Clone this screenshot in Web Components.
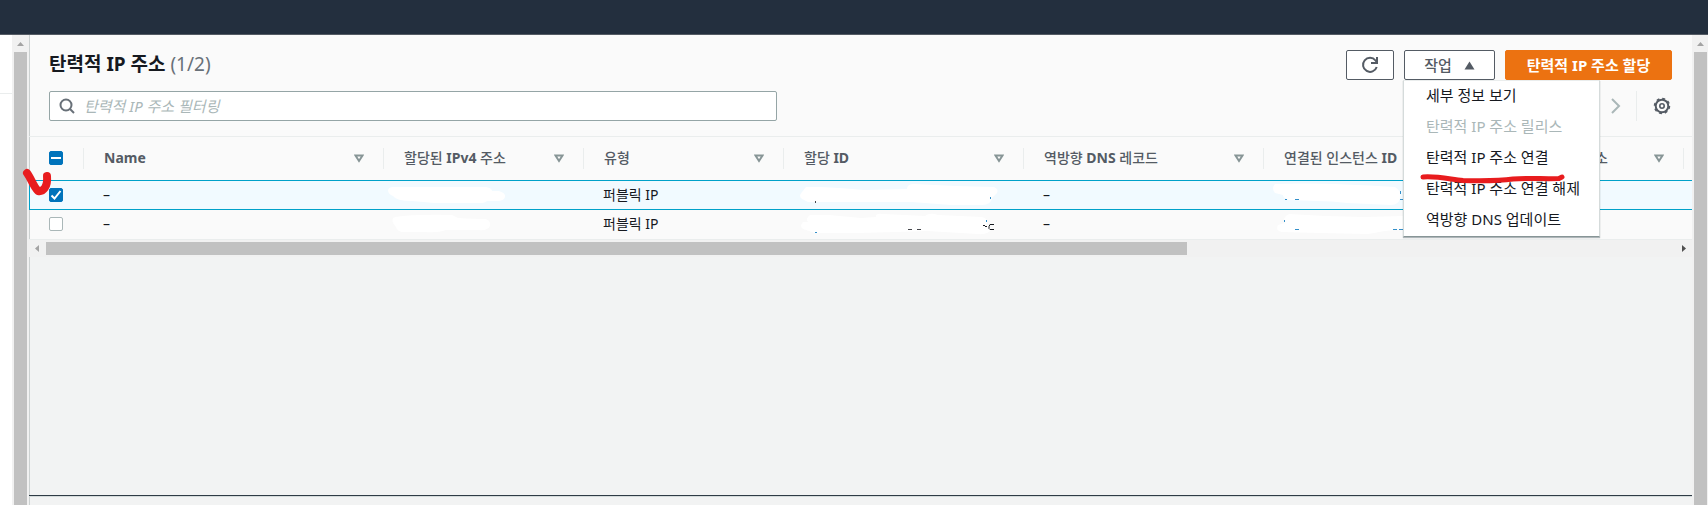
<!DOCTYPE html>
<html lang="ko">
<head>
<meta charset="utf-8">
<title>탄력적 IP 주소</title>
<style>
  body {
    margin: 0;
    background: #f2f3f3;
    color: #16191f;
    font: 14px/20px "Noto Sans", "Noto Sans CJK KR", sans-serif;
    overflow: hidden;
  }
</style>
</head>
<body>
<eip-page></eip-page>

<script>
class ScrollTrack extends HTMLElement {
  constructor() {
    super();
    this.attachShadow({ mode: "open" });
  }

  connectedCallback() {
    this.shadowRoot.innerHTML = `
      <style>
        :host {
          display: flex;
          flex-direction: column;
          box-sizing: border-box;
          width: 17px;
          flex: none;
          padding: 0 2px;
          background: #f1f1f1;
        }
        :host([edge]) { width: 16px; padding-right: 1px; }
        svg { display: block; flex: none; width: 13px; height: 17px; }
        .thumb { flex: 1; background: #c1c1c1; }
        :host([horizontal]) {
          flex-direction: row;
          width: auto;
          height: 17px;
          padding: 2px 0;
        }
        :host([horizontal]) svg { width: 17px; height: 13px; }
        :host([horizontal]) .thumb { flex: 0 0 1141px; }
        .rest { flex: 1; }
      </style>
      ${this.hasAttribute("horizontal") ? `
        <svg viewBox="0 0 17 13"><path d="M10 3v7L6 6.500z" fill="#a3a3a3"/></svg>
        <div class="thumb"></div>
        <div class="rest"></div>
        <svg viewBox="0 0 17 13"><path d="M7 3v7l4-3.500z" fill="#505050"/></svg>
      ` : `
        <svg viewBox="0 0 13 17"><path d="M3 11h7L6.500 7z" fill="#a3a3a3"/></svg>
        <div class="thumb"></div>
      `}
    `;
  }
}

class AppButton extends HTMLElement {
  constructor() {
    super();
    this.attachShadow({ mode: "open" });
  }

  connectedCallback() {
    this.shadowRoot.innerHTML = `
      <style>
        :host { display: block; }
        ::slotted(svg) { flex: none; }
        button {
          display: flex;
          align-items: center;
          justify-content: center;
          gap: 12px;
          box-sizing: border-box;
          height: 30px;
          width: 100%;
          padding: 0;
          border: 1px solid #545b64;
          border-radius: 2px;
          background: #fff;
          color: #545b64;
          font: 500 15px/20px "Noto Sans", "Noto Sans CJK KR", sans-serif;
          white-space: nowrap;
          cursor: pointer;
        }
        :host([primary]) button {
          background: #ec7211;
          border-color: #ec7211;
          color: #fff;
          font-weight: 700;
        }
      </style>
      <button type="button" aria-label="${this.getAttribute("label") || ""}"><slot></slot></button>
    `;
    if (!this.hasAttribute("label")) {
      this.shadowRoot.querySelector("button").removeAttribute("aria-label");
    }
  }
}

class ActionMenu extends HTMLElement {
  constructor() {
    super();
    this.attachShadow({ mode: "open" });
  }

  connectedCallback() {
    this.shadowRoot.innerHTML = `
      <style>
        :host { display: block; position: relative; width: 91px; }
        .menu {
          position: absolute;
          z-index: 3;
          top: 30px;
          left: -1px;
          box-sizing: border-box;
          width: 197px;
          border: 1px solid #d5dbdb;
          border-top-color: #eaeded;
          border-bottom-color: #879596;
          background: #fff;
          box-shadow: 0 1px 1px rgba(0, 28, 36, 0.3);
        }
        .menu button {
          display: block;
          width: 100%;
          height: 31px;
          padding: 0 0 4px 22px;
          border: 0;
          background: none;
          color: #16191f;
          font: 15px/20px "Noto Sans", "Noto Sans CJK KR", sans-serif;
          text-align: left;
          white-space: nowrap;
        }
        .menu button:disabled { color: #aab7b8; }
        .mark { position: absolute; left: 16px; top: 92px; }
      </style>
      <app-button>작업
        <svg width="11" height="9" viewBox="0 0 11 9"><path d="M5.500 0.500 10.500 8.500H0.500z" fill="#545b64"/></svg>
      </app-button>
      <div class="menu" role="menu">
        <button role="menuitem">세부 정보 보기</button>
        <button role="menuitem" disabled>탄력적 IP 주소 릴리스</button>
        <button role="menuitem">탄력적 IP 주소 연결</button>
        <button role="menuitem">탄력적 IP 주소 연결 해제</button>
        <button role="menuitem">역방향 DNS 업데이트</button>
        <svg class="mark" width="146" height="12" viewBox="0 0 146 12" fill="none" stroke="#e81c1e" stroke-width="5" stroke-linecap="round" stroke-linejoin="round">
          <path d="M3 4C17 3 29 6 43 7.500 61 8 79 8 93 6 109 5 125 6 139 5.500L142 4"/>
        </svg>
      </div>
    `;
  }
}

class SearchField extends HTMLElement {
  constructor() {
    super();
    this.attachShadow({ mode: "open" });
  }

  connectedCallback() {
    this.shadowRoot.innerHTML = `
      <style>
        :host { display: block; width: 728px; }
        label {
          display: flex;
          align-items: center;
          gap: 9px;
          box-sizing: border-box;
          height: 30px;
          padding: 0 9px;
          border: 1px solid #95a5a6;
          border-radius: 2px;
          background: #fff;
        }
        svg { flex: none; }
        input {
          flex: 1;
          padding: 0;
          border: 0;
          outline: 0;
          background: none;
          font: 15px/20px "Noto Sans", "Noto Sans CJK KR", sans-serif;
        }
        input::placeholder { color: #aab7b8; font-style: italic; opacity: 1; }
      </style>
      <label>
        <svg width="16" height="16" viewBox="0 0 16 16" fill="none" stroke="#687078" stroke-width="2">
          <circle cx="7" cy="7" r="5.500"/><path d="M11 11l4 4"/>
        </svg>
        <input type="text" placeholder="탄력적 IP 주소 필터링" aria-label="탄력적 IP 주소 필터링">
      </label>
    `;
  }
}

class EipTable extends HTMLElement {
  constructor() {
    super();
    this.attachShadow({ mode: "open" });
  }

  connectedCallback() {
    const headers = [
      "<b>Name</b>", "할당된 <b>IPv4</b> 주소", "유형", "할당 <b>ID</b>",
      "역방향 <b>DNS</b> 레코드", "연결된 인스턴스 <b>ID</b>", "소"
    ];
    const widths = [55, 300, 200, 200, 240, 240, 220, 200, 200];
    const cells = ["–", "", "퍼블릭 IP", "", "–", "", "", ""];

    this.shadowRoot.innerHTML = `
      <style>
        :host { display: block; overflow: hidden; border-bottom: 1px solid #eaeded; }
        table { table-layout: fixed; width: 1855px; border-spacing: 0; }
        th, td { box-sizing: border-box; padding: 0; text-align: left; white-space: nowrap; }
        th {
          height: 44px;
          border-top: 1px solid #eaeded;
          color: #545b64;
          font-weight: 500;
        }
        .head {
          display: flex;
          align-items: center;
          justify-content: space-between;
          height: 21px;
          padding: 0 19px 0 20px;
          border-right: 1px solid #eaeded;
        }
        .head span { padding-bottom: 2px; }
        .head.end { justify-content: flex-end; gap: 46px; }
        .head.check { padding: 0 0 2px 20px; height: 19px; }
        td { height: 29px; padding: 0 0 1px 19px; }
        td:first-child { padding-left: 20px; }
        .selected td {
          height: 30px;
          border-top: 1px solid #00a1c9;
          border-bottom: 1px solid #00a1c9;
          background: #f1faff;
        }
        .selected td:first-child { border-left: 1px solid #00a1c9; padding-left: 19px; }
        input {
          display: block;
          appearance: none;
          width: 14px;
          height: 14px;
          margin: 0;
          border: 1px solid #aab7b8;
          border-radius: 2px;
          background: #fff;
        }
        input.all, input:checked { border-color: #0073bb; background: #0073bb center / 14px 14px no-repeat; }
        input.all {
          background-image: linear-gradient(#fff, #fff);
          background-size: 10px 2px;
        }
        input:checked {
          background-image: url("data:image/svg+xml,%3Csvg xmlns='http://www.w3.org/2000/svg' viewBox='0 0 14 14'%3E%3Cpath d='M2.500 7.500 5.500 10.500 11.500 3' fill='none' stroke='white' stroke-width='2'/%3E%3C/svg%3E");
        }
      </style>
      <table>
        <colgroup>${widths.map(w => `<col style="width: ${w}px">`).join("")}</colgroup>
        <thead>
          <tr>
            <th><div class="head check"><input class="all" type="checkbox" aria-label="모두 선택"></div></th>
            ${headers.map((h, i) => `
              <th><div class="head ${i === 6 ? "end" : ""}"><span>${h}</span>
                <svg width="10" height="9" viewBox="0 0 10 9"><path d="M1.500 1.500h7L5 7z" fill="none" stroke="#879596" stroke-width="2"/></svg>
              </div></th>`).join("")}
            <th></th>
          </tr>
        </thead>
        <tbody>
          ${[true, false].map(on => `
            <tr class="${on ? "selected" : ""}">
              <td><input type="checkbox" aria-label="행 선택" ${on ? "checked" : ""}></td>
              ${cells.map(c => `<td>${c}</td>`).join("")}
            </tr>`).join("")}
        </tbody>
      </table>
    `;
  }
}

/* Hand-drawn strokes: white cover over the addresses and a red tick */
class PenMarks extends HTMLElement {
  constructor() {
    super();
    this.attachShadow({ mode: "open" });
  }

  connectedCallback() {
    this.shadowRoot.innerHTML = `
      <style>
        :host { position: absolute; top: 0; left: 0; z-index: 2; pointer-events: none; }
        svg { display: block; }
      </style>
      <svg width="1404" height="240" viewBox="0 0 1404 240" fill="#fff">
        <path d="M393 187H486Q492 188 492 191H499Q506 193 505 197 504 201 497 201H487Q485 203 480 203H434Q424 202 412 201 396 201 393 196 388 194 388 190 389 187 393 187Z"/>
        <path d="M395 217Q415 214 452 215L458 218Q475 219 486 219 491 221 490 226 488 231 478 230L446 230Q438 233 425 232H402Q397 231 396 227 391 222 393 218Z"/>
        <path d="M806 187H821Q843 188 864 190L907 189Q907 184 914 184L955 186 994 187Q999 189 997 193L992 198Q991 205 982 205H951L912 202 850 202 808 202 802 199Q798 196 802 192Z"/>
        <path d="M810 215 829 215 861 218 876 217Q875 213 883 214L925 216Q930 212 938 215L982 217Q989 219 987 224L992 229Q988 235 978 234L927 231 896 232 858 233H815L803 229Q799 226 803 222H808Q805 219 810 215Z"/>
        <path d="M1275 184Q1320 182 1395 187 1402 191 1400 198 1399 205 1391 205L1347 203Q1332 201 1317 201L1289 200Q1283 198 1283 195L1275 193Q1271 188 1275 184Z"/>
        <path d="M1289 214 1325 216 1364 217 1404 216V229L1385 231 1368 234 1320 233 1281 232Q1275 230 1278 225L1285 223Q1282 217 1289 214Z"/>
        <g fill="none" stroke="#16191f" stroke-width="1">
          <path d="M815.500 201v2M908 229.500h4M917 229.500h4" opacity="0.800"/>
          <path d="M983 225.500h2M985 226.500h2M994 224.500h-4l-1 2v2l1 1h4"/>
        </g>
        <g fill="none" stroke="#0073bb" stroke-width="1">
          <path d="M990.500 197v2M986.500 220v2M815 232.500h2M1285 199.500h2M1295 199.500h4M1400.500 191v3M1400 199.500h3M1284.500 220v2M1295 229.500h4M1393 229.500h4M1399 229.500h5" opacity="0.800"/>
        </g>
        <path d="M27 173C31 178 33 186 38 191 43 192 48 187 47 176" fill="none" stroke="#e81c1e" stroke-width="8" stroke-linecap="round" stroke-linejoin="round"/>
      </svg>
    `;
  }
}

class EipPage extends HTMLElement {
  constructor() {
    super();
    this.attachShadow({ mode: "open" });
  }

  connectedCallback() {
    this.shadowRoot.innerHTML = `
      <style>
        :host { display: flex; flex-direction: column; height: 100vh; }
        .top { flex: none; height: 34px; background: #232f3e; border-bottom: 1px solid #545b64; }
        .body { display: flex; flex: 1; min-height: 0; }
        .nav { width: 12px; background: #fff; }
        .nav div { height: 58px; border-bottom: 1px solid #eaeded; }
        main {
          display: flex;
          flex-direction: column;
          flex: 1;
          min-width: 0;
          box-shadow: inset 1px 0 #ccd1d1;
        }
        .panel { background: #fafafa; box-shadow: inset 1px 0 #ccd1d1; }
        .bar { display: flex; justify-content: space-between; align-items: center; padding: 0 20px; }
        .title { padding-top: 15px; padding-bottom: 11px; }
        .filter { padding-bottom: 15px; }
        h1 { margin: 0; padding-bottom: 2px; font-size: 19px; line-height: 28px; font-weight: 700; }
        h1 span { color: #687078; font-weight: 400; }
        .actions { display: flex; gap: 10px; }
        .refresh { width: 48px; }
        .create { width: 167px; }
        .pager { display: flex; align-items: center; height: 30px; }
        .pager button { display: block; padding: 0; border: 0; background: none; }
        .pager svg { display: block; }
        .settings { display: flex; align-items: center; height: 30px; margin-left: 15px; padding: 0 1px 0 16px; border-left: 1px solid #eaeded; }
        .split { height: 9px; margin-top: auto; border-top: 1px solid #2f3b45; box-shadow: inset 0 1px #d5dbdb; }
      </style>
      <div class="top"></div>
      <div class="body">
        <div class="nav"><div></div></div>
        <scroll-track></scroll-track>
        <main>
          <div class="panel">
            <div class="bar title">
              <h1>탄력적 IP 주소 <span>(1/2)</span></h1>
              <div class="actions">
                <app-button class="refresh" label="새로 고침">
                  <svg width="18" height="18" viewBox="0 0 18 18" fill="none" stroke="#545b64" stroke-width="2">
                    <path d="M15.700 11A7 7 0 1 1 14.500 4.500L16 6.500"/><path d="M16 1v6h-6"/>
                  </svg>
                </app-button>
                <action-menu></action-menu>
                <app-button class="create" primary>탄력적 IP 주소 할당</app-button>
              </div>
            </div>
            <div class="bar filter">
              <search-field></search-field>
              <div class="pager">
                <button type="button" aria-label="다음 페이지">
                  <svg width="10" height="16" viewBox="0 0 10 16" fill="none" stroke="#aab7b8" stroke-width="2"><path d="M1 1l7 7-7 7"/></svg>
                </button>
                <div class="settings">
                  <button type="button" aria-label="기본 설정">
                    <svg width="18" height="18" viewBox="0 0 18 18" fill="none" stroke="#545b64">
                      <circle cx="9" cy="9" r="6.300" stroke-width="2"/>
                      <circle cx="9" cy="9" r="7.500" stroke-width="1.500" stroke-dasharray="2.950 2.940"/>
                      <circle cx="9" cy="9" r="2.200" stroke-width="1.600"/>
                    </svg>
                  </button>
                </div>
              </div>
            </div>
            <eip-table></eip-table>
          </div>
          <scroll-track horizontal></scroll-track>
          <div class="split"></div>
        </main>
        <scroll-track edge></scroll-track>
      </div>
      <pen-marks></pen-marks>
    `;
  }
}

customElements.define("scroll-track", ScrollTrack);
customElements.define("app-button", AppButton);
customElements.define("action-menu", ActionMenu);
customElements.define("search-field", SearchField);
customElements.define("eip-table", EipTable);
customElements.define("pen-marks", PenMarks);
customElements.define("eip-page", EipPage);
</script>
</body>
</html>
